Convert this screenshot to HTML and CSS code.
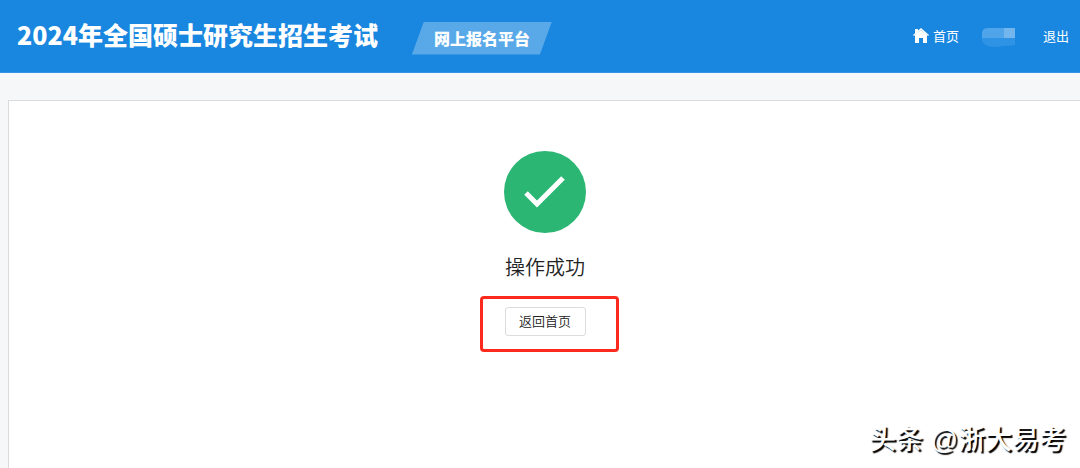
FILE: index.html
```html
<!DOCTYPE html>
<html lang="zh-CN">

<head>
  <meta charset="UTF-8" />
  <meta name="viewport" content="width=device-width, initial-scale=1.0" />
  <title>网上报名平台</title>
  <link rel="stylesheet" href="styles.css">
</head>

<body>
  <header class="header">
    <h1 class="title">2024年全国硕士研究生招生考试</h1>
    <div class="platform">网上报名平台</div>
    <nav class="nav">
      <a class="home" href="#">
        <svg class="home-icon" viewBox="0 0 16 16" aria-hidden="true">
          <path d="M2 1h3v3L2 6z" />
          <path d="M8 0L0 7l1 1 7-6 7 6 1-1z" />
          <path d="M8 2L2 7v8h4v-5h4v5h4V7z" />
        </svg>
        <span>首页</span>
      </a>
      <svg class="user" viewBox="0 0 40 22" aria-hidden="true">
        <path d="M1 13h33v7l-20 2q-10 0-13-6z" fill="#2f93e5" />
        <path d="M1 13V7q1-4 6-4h16v10z" fill="#50a4e9" />
        <path d="M23 3h11v10H23z" fill="#73b6ed" />
      </svg>
      <a href="#">退出</a>
    </nav>
  </header>

  <main class="panel">
    <svg class="success-icon" viewBox="0 0 82 82" aria-hidden="true">
      <circle cx="41" cy="41" r="41" fill="#2bb673" />
      <path d="M22 42l11 11 26-26" fill="none" stroke="#fff" stroke-width="5" />
    </svg>
    <p class="message">操作成功</p>
    <div class="action">
      <button type="button" class="btn-back">返回首页</button>
      <span class="mark"></span>
    </div>
  </main>

  <div class="watermark">头条 @浙大易考</div>
</body>

</html>
```
FILE: styles.css
```css
* {
  box-sizing: border-box;
}

body {
  margin: 0;
  height: 100vh;
  display: flex;
  flex-direction: column;
  position: relative;
  overflow: hidden;
  background-color: #f6f7f9;
  color: #222;
  font-family: "Noto Sans CJK SC", "Liberation Sans", sans-serif;
}

.header {
  flex: none;
  display: flex;
  align-items: center;
  height: 73px;
  padding: 0 11px 0 17px;
  background-color: #1987e0;
  border-bottom: 1px solid #3595e4;
  color: #fff;
}

.title {
  margin: 0;
  padding-bottom: 4px;
  font-size: 25px;
  line-height: 36px;
  font-weight: 900;
}

.platform {
  width: 140px;
  height: 33px;
  margin-left: 34px;
  margin-top: 4px;
  background-color: #59a9e9;
  clip-path: polygon(12px 0, 100% 0, 128px 100%, 0 100%);
  font-size: 16px;
  line-height: 32px;
  font-weight: 900;
  text-align: center;
}

.nav {
  display: flex;
  align-items: center;
  margin-left: auto;
  font-size: 13px;
  line-height: 20px;
}

.nav a {
  color: #fff;
  text-decoration: none;
}

.home {
  display: flex;
  align-items: center;
  gap: 4px;
}

.home-icon {
  width: 16px;
  height: 16px;
  fill: #fff;
}

.user {
  width: 40px;
  height: 22px;
  margin: 0 22px;
}

.panel {
  flex: 1;
  display: flex;
  flex-direction: column;
  align-items: center;
  margin: 27px -2px 0 8px;
  padding-top: 50px;
  background-color: #fff;
  border: 1px solid #d9dbde;
  border-bottom: none;
}

.success-icon {
  flex: none;
  width: 82px;
  height: 82px;
}

.message {
  margin: 18px 0 24px;
  font-size: 20px;
  line-height: 32px;
  font-weight: 350;
}

.action {
  position: relative;
}

.btn-back {
  display: block;
  width: 81px;
  height: 29px;
  padding: 0 0 2px;
  background-color: #fff;
  border: 1px solid #dcdcdc;
  border-radius: 3px;
  color: #222;
  font-family: inherit;
  font-size: 13px;
  font-weight: 350;
  cursor: pointer;
}

.btn-back:hover {
  border-color: #1987e0;
  color: #1987e0;
}

/* red frame around the button */
.mark {
  position: absolute;
  top: -11px;
  right: -33px;
  bottom: -16px;
  left: -25px;
  border: 3px solid #fb2a1c;
  border-radius: 4px;
  pointer-events: none;
}

.watermark {
  position: absolute;
  right: 14px;
  bottom: 8px;
  color: #fff;
  font-family: "Liberation Sans", "Noto Sans CJK SC", sans-serif;
  font-size: 27px;
  line-height: 40px;
  font-weight: 500;
  text-shadow: 2px 2px 1px #000;
}
```
